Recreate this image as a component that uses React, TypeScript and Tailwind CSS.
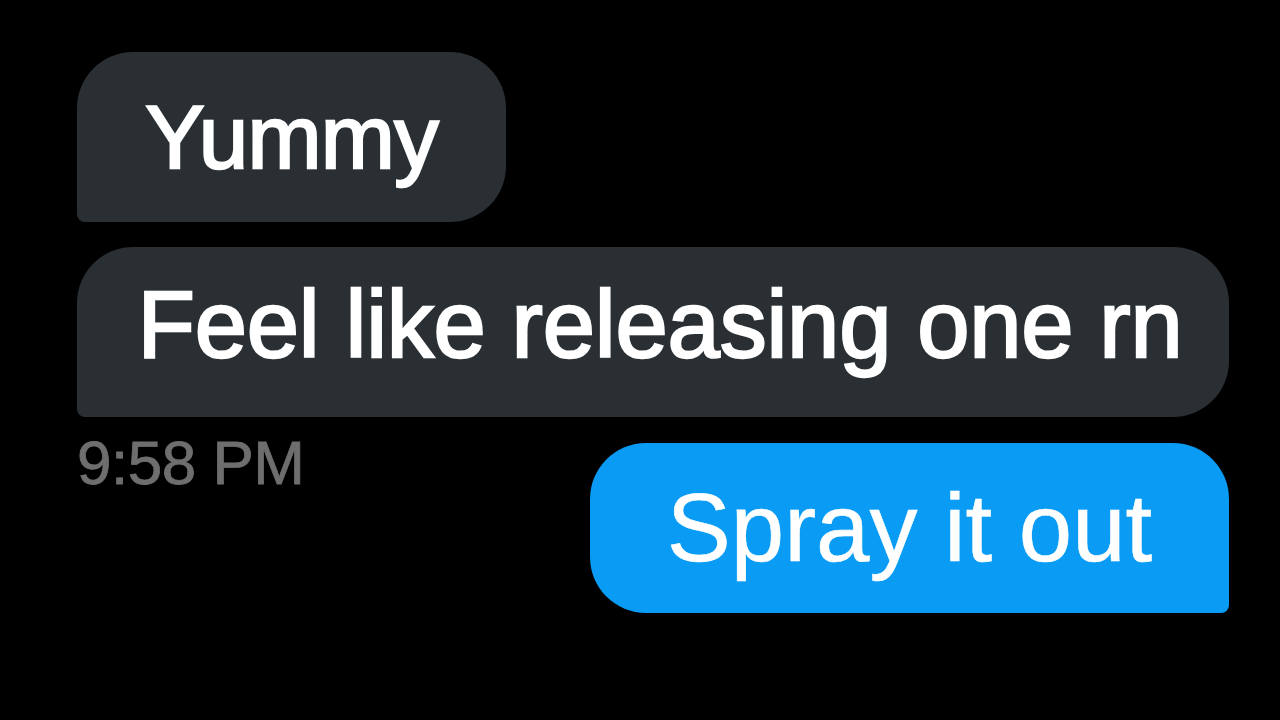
import React from "react";

const sans = "font-['Liberation_Sans',Arial,sans-serif]";
// a thin outline gives the regular face a medium weight
const medium = "[-webkit-text-stroke:2.3px_white]";

export default function App() {
  return (
    <div className={`h-[720px] w-full overflow-hidden bg-black ${sans} flex flex-col pl-[77px] pr-[51px] pt-[52px]`}>
      {/* incoming: short message */}
      <div className="flex h-[170px] w-[429px] items-center justify-center rounded-[56px] rounded-bl-[8px] bg-[#2a2f34]">
        <span className={`whitespace-nowrap text-[89px] tracking-[-0.8px] leading-none text-white ${medium}`}>
          Yummy
        </span>
      </div>

      {/* incoming: long message */}
      <div className="mt-[25px] flex h-[170px] w-full items-center justify-center rounded-[56px] rounded-bl-[8px] bg-[#2a2f34] pb-[14px] pl-[14px]">
        <span className={`whitespace-nowrap text-[94px] tracking-[-0.2px] leading-none text-white ${medium}`}>
          Feel like releasing one rn
        </span>
      </div>

      {/* timestamp + outgoing reply */}
      <div className="mt-[26px] flex items-start justify-between">
        <span className="-mt-[11px] whitespace-nowrap text-[62px] tracking-[-0.5px] leading-none text-[#6e6e6e] [-webkit-text-stroke:0.8px_#6e6e6e]">
          9:58 PM
        </span>
        <div className="flex h-[170px] w-[639px] items-center justify-center rounded-[56px] rounded-br-[8px] bg-[#0a9cf4]">
          <span className="whitespace-nowrap text-[96px] leading-none text-white [-webkit-text-stroke:0.6px_white]">
            Spray it out
          </span>
        </div>
      </div>
    </div>
  );
}
